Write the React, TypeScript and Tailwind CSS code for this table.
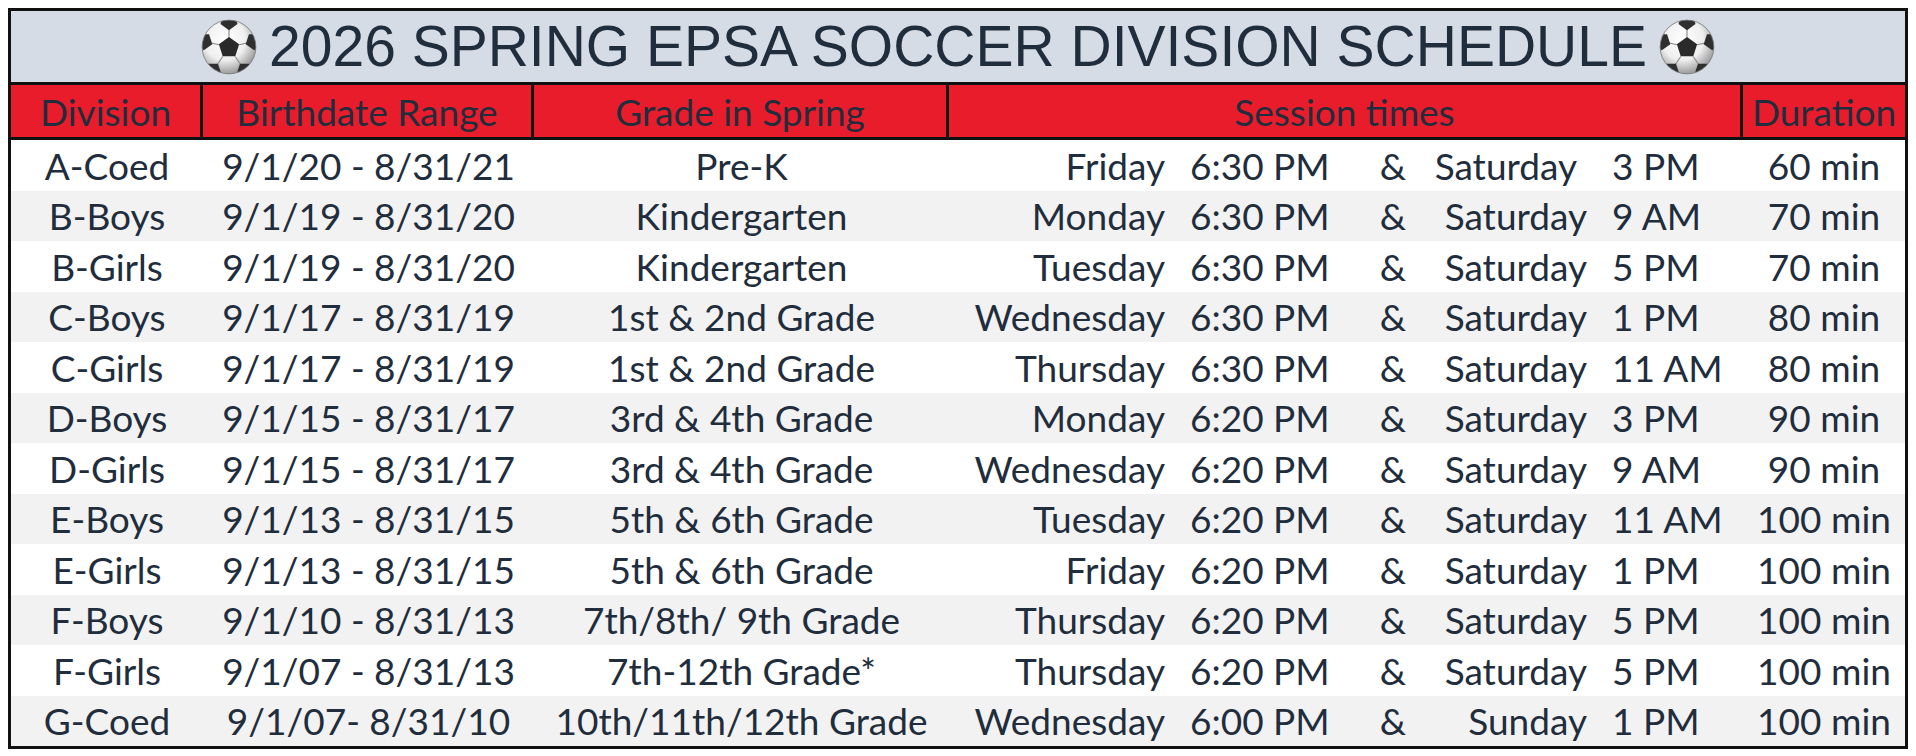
import React from 'react'

interface Row {
  division: string
  birth: string
  grade: string
  day1: string
  time1: string
  day2: string
  time2: string
  duration: string
  wide?: boolean // first row has the second day pushed a bit further left
}

const ROWS: Row[] = [
  { division: 'A-Coed', birth: '9/1/20 - 8/31/21', grade: 'Pre-K', day1: 'Friday', time1: '6:30 PM', day2: 'Saturday', time2: '3 PM', duration: '60 min', wide: true },
  { division: 'B-Boys', birth: '9/1/19 - 8/31/20', grade: 'Kindergarten', day1: 'Monday', time1: '6:30 PM', day2: 'Saturday', time2: '9 AM', duration: '70 min' },
  { division: 'B-Girls', birth: '9/1/19 - 8/31/20', grade: 'Kindergarten', day1: 'Tuesday', time1: '6:30 PM', day2: 'Saturday', time2: '5 PM', duration: '70 min' },
  { division: 'C-Boys', birth: '9/1/17 - 8/31/19', grade: '1st & 2nd Grade', day1: 'Wednesday', time1: '6:30 PM', day2: 'Saturday', time2: '1 PM', duration: '80 min' },
  { division: 'C-Girls', birth: '9/1/17 - 8/31/19', grade: '1st & 2nd Grade', day1: 'Thursday', time1: '6:30 PM', day2: 'Saturday', time2: '11 AM', duration: '80 min' },
  { division: 'D-Boys', birth: '9/1/15 - 8/31/17', grade: '3rd & 4th Grade', day1: 'Monday', time1: '6:20 PM', day2: 'Saturday', time2: '3 PM', duration: '90 min' },
  { division: 'D-Girls', birth: '9/1/15 - 8/31/17', grade: '3rd & 4th Grade', day1: 'Wednesday', time1: '6:20 PM', day2: 'Saturday', time2: '9 AM', duration: '90 min' },
  { division: 'E-Boys', birth: '9/1/13 - 8/31/15', grade: '5th & 6th Grade', day1: 'Tuesday', time1: '6:20 PM', day2: 'Saturday', time2: '11 AM', duration: '100 min' },
  { division: 'E-Girls', birth: '9/1/13 - 8/31/15', grade: '5th & 6th Grade', day1: 'Friday', time1: '6:20 PM', day2: 'Saturday', time2: '1 PM', duration: '100 min' },
  { division: 'F-Boys', birth: '9/1/10 - 8/31/13', grade: '7th/8th/ 9th Grade', day1: 'Thursday', time1: '6:20 PM', day2: 'Saturday', time2: '5 PM', duration: '100 min' },
  { division: 'F-Girls', birth: '9/1/07 - 8/31/13', grade: '7th-12th Grade*', day1: 'Thursday', time1: '6:20 PM', day2: 'Saturday', time2: '5 PM', duration: '100 min' },
  { division: 'G-Coed', birth: '9/1/07- 8/31/10', grade: '10th/11th/12th Grade', day1: 'Wednesday', time1: '6:00 PM', day2: 'Sunday', time2: '1 PM', duration: '100 min' },
]

// ball drawn by hand, emoji fonts aren't reliable in the sandbox
function SoccerBall() {
  const edge = [
    [50, 4],
    [95, 40],
    [79, 93],
    [21, 93],
    [5, 40],
  ]
  const pent = (cx: number, cy: number, r: number, rot = -90) =>
    Array.from({ length: 5 }, (_, i) => {
      const a = ((rot + i * 72) * Math.PI) / 180
      return `${(cx + r * Math.cos(a)).toFixed(1)},${(cy + r * Math.sin(a)).toFixed(1)}`
    }).join(' ')
  const inner = [
    [50, 33],
    [68, 46],
    [61, 67],
    [39, 67],
    [32, 46],
  ]
  return (
    <svg width="56" height="56" viewBox="0 0 100 100">
      <defs>
        <radialGradient id="ballg" cx="42%" cy="36%" r="64%">
          <stop offset="0%" stopColor="#ffffff" />
          <stop offset="60%" stopColor="#efefef" />
          <stop offset="100%" stopColor="#9c9c9c" />
        </radialGradient>
        <clipPath id="ballc">
          <circle cx="50" cy="50" r="48" />
        </clipPath>
      </defs>
      <circle cx="50" cy="50" r="48" fill="url(#ballg)" />
      <g clipPath="url(#ballc)">
        {inner.map(([x, y], i) => (
          <line key={i} x1={x} y1={y} x2={edge[i][0]} y2={edge[i][1]} stroke="#8a8a8a" strokeWidth="2" />
        ))}
        {edge.map(([x, y], i) => (
          <polygon key={i} points={pent(x, y, 16, -90 + i * 72 + 180)} fill="#2f2f2f" />
        ))}
        <polygon points={pent(50, 51, 19)} fill="#2a2a2a" />
      </g>
      <circle cx="50" cy="50" r="48" fill="none" stroke="#777" strokeWidth="1.5" />
    </svg>
  )
}

const COLS = 'grid grid-cols-[192px_331px_415px_794px_1fr]'

export default function App() {
  return (
    <div className="min-h-screen bg-white p-2">
      <div className="w-[1900px] border-[3px] border-[#111111] text-[#1f2d3d]" style={{ fontFamily: 'Lato, "Open Sans", sans-serif' }}>
        {/* title */}
        <div className="flex h-[74px] items-center justify-center gap-3 border-b-[3px] border-[#111111] bg-[#d6dce5]">
          <SoccerBall />
          <span className="text-[57px] leading-none" style={{ fontFamily: '"Liberation Sans", Arial, sans-serif' }}>
            2026 SPRING EPSA SOCCER DIVISION SCHEDULE
          </span>
          <SoccerBall />
        </div>

        {/* header */}
        <div className={`${COLS} h-[55px] border-b-[3px] border-[#111111] bg-[#e91c2c] text-[37px] leading-none`}>
          <div className="flex items-center justify-center border-r-[3px] border-[#111111]">Division</div>
          <div className="flex items-center justify-center border-r-[3px] border-[#111111]">Birthdate Range</div>
          <div className="flex items-center justify-center border-r-[3px] border-[#111111]">Grade in Spring</div>
          <div className="flex items-center justify-center border-r-[3px] border-[#111111]">Session times</div>
          <div className="flex items-center justify-center">Duration</div>
        </div>

        {/* rows */}
        {ROWS.map((r, i) => (
          <div key={r.division} className={`${COLS} h-[50.5px] text-[37px] leading-none ${i % 2 ? 'bg-[#f2f2f2]' : 'bg-white'}`}>
            <div className="flex items-center justify-center">{r.division}</div>
            <div className="flex items-center justify-center whitespace-pre">{r.birth}</div>
            <div className="flex items-center justify-center">{r.grade}</div>
            <div className="flex items-center whitespace-nowrap">
              <span className="w-[216px] shrink-0 text-right">{r.day1}</span>
              <span className="ml-[25px] w-[149px] shrink-0">{r.time1}</span>
              <span className="ml-[14px] w-[80px] shrink-0 text-center">&amp;</span>
              <span className={`w-[154px] shrink-0 text-right ${r.wide ? 'pr-[10px]' : ''}`}>{r.day2}</span>
              <span className="ml-[25px]">{r.time2}</span>
            </div>
            <div className="flex items-center justify-center">{r.duration}</div>
          </div>
        ))}
      </div>
    </div>
  )
}
